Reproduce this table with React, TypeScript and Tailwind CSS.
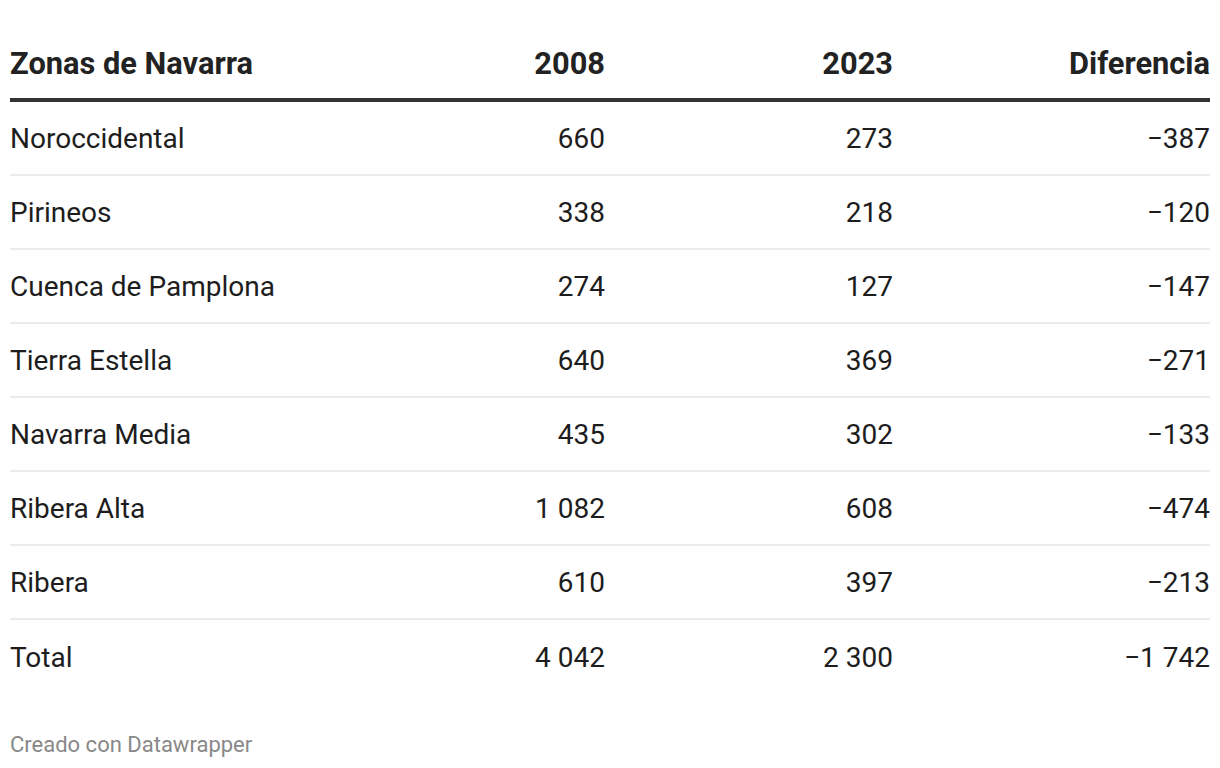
import React from "react";

type Row = {
  zona: string;
  y2008: string;
  y2023: string;
  diff: string;
};

const rows: Row[] = [
  { zona: "Noroccidental", y2008: "660", y2023: "273", diff: "−387" },
  { zona: "Pirineos", y2008: "338", y2023: "218", diff: "−120" },
  { zona: "Cuenca de Pamplona", y2008: "274", y2023: "127", diff: "−147" },
  { zona: "Tierra Estella", y2008: "640", y2023: "369", diff: "−271" },
  { zona: "Navarra Media", y2008: "435", y2023: "302", diff: "−133" },
  { zona: "Ribera Alta", y2008: "1 082", y2023: "608", diff: "−474" },
  { zona: "Ribera", y2008: "610", y2023: "397", diff: "−213" },
  { zona: "Total", y2008: "4 042", y2023: "2 300", diff: "−1 742" },
];

const cols = "grid grid-cols-[395px_200px_288px_317px]";

export default function App() {
  return (
    <div className="h-[768px] w-[1220px] bg-white px-[10px] font-['Roboto',sans-serif] text-[#1d1d1d]">
      <div className={`${cols} h-[98px] items-center pt-[30px] text-[30.8px] leading-none font-bold text-[#222]`}>
        <div>Zonas de Navarra</div>
        <div className="text-right">2008</div>
        <div className="text-right">2023</div>
        <div className="text-right">Diferencia</div>
      </div>
      <div className="h-[4px] bg-[#333]" />
      {rows.map((r, i) => (
        <div
          key={r.zona}
          className={`${cols} h-[74px] items-center pt-[2px] text-[28px] leading-none ${
            i < rows.length - 1 ? "border-b-2 border-[#ececec]" : ""
          }`}
        >
          <div>{r.zona}</div>
          <div className="text-right tabular-nums">{r.y2008}</div>
          <div className="text-right tabular-nums">{r.y2023}</div>
          <div className="text-right tabular-nums">{r.diff}</div>
        </div>
      ))}
      <div className="pt-[40px] text-[22px] leading-none text-[#888]">Creado con Datawrapper</div>
    </div>
  );
}
